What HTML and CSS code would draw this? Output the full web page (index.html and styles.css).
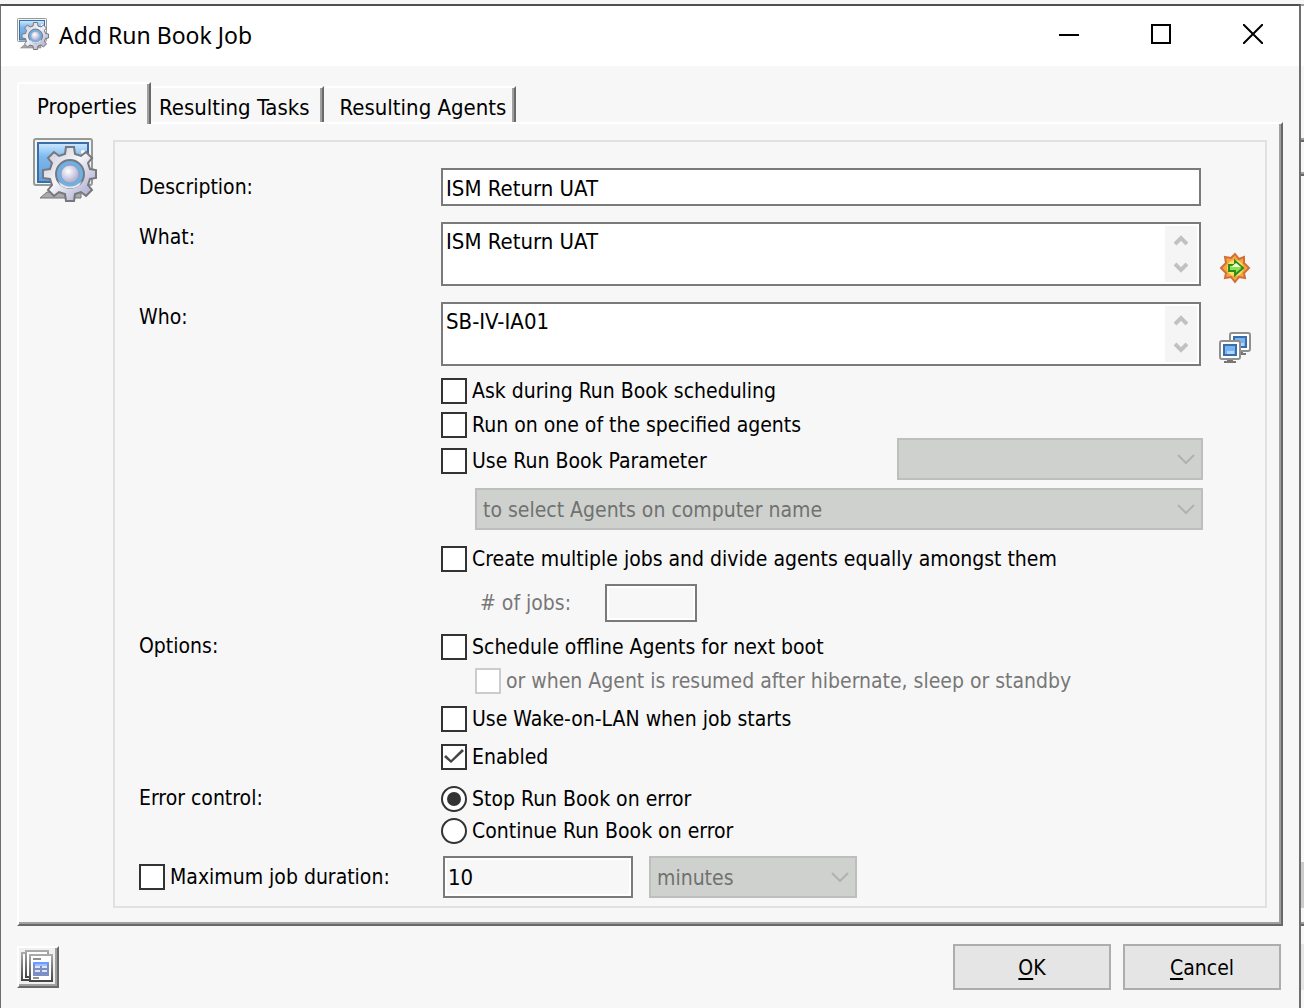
FILE: index.html
```html
<!DOCTYPE html>
<html lang="en">
<head>
<meta charset="utf-8">
<title>Add Run Book Job</title>
<link rel="stylesheet" href="styles.css">
</head>
<body>
<svg class="defs" aria-hidden="true">
  <defs>
    <linearGradient id="screen" x1="0" y1="0" x2="0" y2="1"><stop offset="0" stop-color="#cfe9ff"/><stop offset=".35" stop-color="#7db9ee"/><stop offset="1" stop-color="#5f9fd8"/></linearGradient>
    <linearGradient id="metal" x1="0" y1="0" x2="1" y2="1"><stop offset="0" stop-color="#c4c4d4"/><stop offset=".45" stop-color="#f5f5fa"/><stop offset="1" stop-color="#9a9ac8"/></linearGradient>
    <radialGradient id="hub" cx=".4" cy=".35" r=".7"><stop offset="0" stop-color="#fff"/><stop offset="1" stop-color="#a6a6cc"/></radialGradient>
    <linearGradient id="page" x1="0" y1="0" x2="0" y2="1"><stop offset="0" stop-color="#aaa"/><stop offset="1" stop-color="#444"/></linearGradient>
    <symbol id="job" viewBox="0 0 64 64">
      <path d="M7 60l7-6h34v6z" fill="#aaa" stroke="#777"/>
      <rect x="1" y="1" width="58" height="46" rx="2" fill="#f4f4f4" stroke="#969a96" stroke-width="2"/>
      <rect x="5" y="5" width="50" height="39" fill="url(#screen)" stroke="#3a6ea8" stroke-width="2"/>
      <circle cx="50" cy="14" r="2" fill="#fff"/>
      <path transform="translate(37 36)" fill="url(#metal)" stroke="#77777c" stroke-width="2" d="M-5-20L-4-27H4L5-20L11-18L16-22L22-16L18-11L20-5L26-4V4L20 5L18 11L22 16L16 22L11 18L5 20L4 27H-4L-5 20L-11 18L-16 22L-22 16L-18 11L-20 5L-27 4V-4L-20-5L-18-11L-22-16L-16-22L-11-18Z"/>
      <circle cx="37" cy="36" r="14" fill="#6cb0e4" stroke="#77777c" stroke-width="2"/>
      <path d="M25 43q12 11 24 0l-3 5q-9 5-18 0z" fill="#e8e8ea"/>
      <circle cx="37" cy="36" r="9" fill="url(#hub)" stroke="#9c9cb8" stroke-width="1"/>
    </symbol>
    <symbol id="up" viewBox="0 0 14 12"><path d="M1 10l6-6 6 6" fill="none" stroke="#c0c2c0" stroke-width="4"/></symbol>
    <symbol id="down" viewBox="0 0 14 12"><path d="M1 2l6 6 6-6" fill="none" stroke="#c0c2c0" stroke-width="4"/></symbol>
    <symbol id="chevron" viewBox="0 0 18 12"><path d="M1 2l8 8 8-8" fill="none" stroke="#b0b2b0" stroke-width="2"/></symbol>
    <symbol id="monitor" viewBox="0 0 22 24">
      <path d="M8 18h6v3h3v2H5v-2h3z" fill="#777"/>
      <rect x="1" y="1" width="20" height="18" rx="2" fill="#fff" stroke="#909090" stroke-width="2"/>
      <rect x="5" y="5" width="12" height="10" fill="#78b4f4" stroke="#3a6ea8" stroke-width="2"/>
      <path d="M8 11h7v3H8z" fill="#b0d6ff"/>
    </symbol>
  </defs>
</svg>
<div class="desktop">
  <main class="dialog">
    <header class="titlebar">
      <svg class="app-icon"><use href="#job"/></svg>
      <h1>Add Run Book Job</h1>
      <button class="caption" type="button" aria-label="Minimize"><svg viewBox="0 0 20 20"><path d="M0 11h20" stroke="#000" stroke-width="2"/></svg></button>
      <button class="caption" type="button" aria-label="Maximize"><svg viewBox="0 0 20 20"><path d="M1 1h18v18H1z" fill="none" stroke="#000" stroke-width="2"/></svg></button>
      <button class="caption" type="button" aria-label="Close"><svg viewBox="0 0 20 20"><path d="M0 0l20 20M20 0L0 20" stroke="#000" stroke-width="2"/></svg></button>
    </header>
    <form class="content">
      <div class="tabs" role="tablist">
        <button class="tab active" type="button" role="tab" aria-selected="true">Properties</button>
        <button class="tab" type="button" role="tab">Resulting Tasks</button>
        <button class="tab last" type="button" role="tab">Resulting Agents</button>
      </div>
      <section class="panel">
        <svg class="panel-icon"><use href="#job"/></svg>
        <div class="group">
          <div class="section">
            <label class="field-label" for="description">Description:</label>
            <input class="text" id="description" value="ISM Return UAT">
          </div>
          <div class="section">
            <label class="row-label" for="what">What:</label>
            <div class="memo">
              <textarea id="what">ISM Return UAT</textarea>
              <span class="scroll"><svg><use href="#up"/></svg><svg><use href="#down"/></svg></span>
            </div>
            <button class="pick" type="button" aria-label="Select task">
              <svg viewBox="0 0 32 32">
                <path d="M16 2l4 5 5-2v6l5 5-5 5 1 5-6-1-4 5-4-5-6 1 1-5-5-5 5-5-1-6 6 1z" fill="#f7a83c" stroke="#d07038" stroke-width="2"/>
                <circle cx="16" cy="16" r="8" fill="#fde06a"/>
                <path d="M10 13h6V9l8 7-8 7v-4h-6z" fill="#8fe04a" stroke="#2e8b1e" stroke-width="2"/>
                <path d="M17 11l5 4H12z" fill="#e8ffd0"/>
              </svg>
            </button>
          </div>
          <div class="section">
            <label class="row-label" for="who">Who:</label>
            <div class="memo">
              <textarea id="who">SB-IV-IA01</textarea>
              <span class="scroll"><svg><use href="#up"/></svg><svg><use href="#down"/></svg></span>
            </div>
            <button class="pick" type="button" aria-label="Select agents">
              <svg viewBox="0 0 32 32">
                <use href="#monitor" x="10" y="0" width="22" height="24"/>
                <use href="#monitor" x="0" y="8" width="22" height="24"/>
              </svg>
            </button>
          </div>
          <div class="section agents">
            <div class="stack">
              <label class="check"><input type="checkbox">Ask during Run Book scheduling</label>
              <label class="check gap-s"><input type="checkbox">Run on one of the specified agents</label>
              <div class="parameter">
                <label class="check"><input type="checkbox">Use Run Book Parameter</label>
                <span class="drop"><select disabled aria-label="Run Book Parameter"><option></option></select><svg><use href="#chevron"/></svg></span>
              </div>
              <span class="drop indent gap-s"><select disabled aria-label="Select agents by"><option>to select Agents on computer name</option></select><svg><use href="#chevron"/></svg></span>
              <label class="check gap-l"><input type="checkbox">Create multiple jobs and divide agents equally amongst them</label>
              <div class="jobs gap-m">
                <label for="jobs"># of jobs:</label>
                <input class="text" id="jobs" disabled>
              </div>
            </div>
          </div>
          <div class="section options">
            <span class="field-label">Options:</span>
            <div class="stack">
              <label class="check"><input type="checkbox">Schedule offline Agents for next boot</label>
              <label class="check indent gap-s"><input type="checkbox" disabled>or when Agent is resumed after hibernate, sleep or standby</label>
              <label class="check gap-m"><input type="checkbox">Use Wake-on-LAN when job starts</label>
              <label class="check gap-m"><input type="checkbox" checked>Enabled</label>
            </div>
          </div>
          <div class="section errors">
            <span class="field-label">Error control:</span>
            <div class="stack">
              <label class="check"><input type="radio" name="error" checked>Stop Run Book on error</label>
              <label class="check gap-xs"><input type="radio" name="error">Continue Run Book on error</label>
            </div>
          </div>
          <div class="section duration">
            <label class="check"><input type="checkbox">Maximum job duration:</label>
            <div class="duration-fields">
              <input class="text" value="10" disabled aria-label="Duration">
              <span class="drop"><select disabled aria-label="Duration unit"><option>minutes</option></select><svg><use href="#chevron"/></svg></span>
            </div>
          </div>
        </div>
      </section>
      <footer class="actions">
        <button class="tool" type="button" aria-label="Templates">
          <svg viewBox="0 0 34 34">
            <rect x="1" y="3" width="22" height="27" fill="#fff" stroke="url(#page)" stroke-width="2"/>
            <rect x="5" y="1" width="22" height="26" fill="#fff" stroke="url(#page)" stroke-width="2"/>
            <rect x="9" y="5" width="22" height="26" fill="#fff" stroke="url(#page)" stroke-width="2"/>
            <path d="M12 9h8M12 28h6" stroke="#909090" stroke-width="2"/>
            <path d="M12 12h16v14H12z" fill="#7b8fc4"/>
            <path d="M12 12h16v2H12z" fill="#6c9cff"/>
            <path d="M14 14h12v2H14z" fill="#9cc0ff"/>
            <path d="M14 17h5M21 17h5M14 21h5M21 21h5" stroke="#e0e6f4" stroke-width="2"/>
          </svg>
        </button>
        <button class="action" type="submit"><u>O</u>K</button>
        <button class="action" type="button"><u>C</u>ancel</button>
      </footer>
    </form>
  </main>
  <div class="behind"></div>
</div>
</body>
</html>
```
FILE: styles.css
```css
* { box-sizing: border-box; }

body {
  margin: 0;
  background: #f7f7f7;
  color: #000;
  font: 21px/26px "DejaVu Sans Condensed", "Noto Sans", sans-serif;
}

button, input, select, textarea {
  margin: 0;
  border-radius: 0;
  color: inherit;
  font: inherit;
}

svg { display: block; }
.defs { position: absolute; width: 0; height: 0; }

.desktop {
  display: flex;
  min-height: 100vh;
  padding-top: 4px;
}

.dialog {
  flex: 1;
  border: solid #6e6e6e;
  border-width: 2px 2px 0 1px;
  border-top-color: #505050;
}

/* Sliver of the parent window that shows beside the dialog */
.behind {
  width: 3px;
  background: linear-gradient(
    #a0a0a0 0 2px, #fff 2px 62px, #f7f7f7 62px 134px, #a0a0a0 134px 136px, #696969 136px 138px,
    #f7f7f7 138px 168px, #a0a0a0 168px 170px, #696969 170px 172px, #f7f7f7 172px 858px,
    #ccc 858px 904px, #f7f7f7 904px 918px, #a0a0a0 918px 920px, #696969 920px 922px,
    #f7f7f7 922px 940px, #e5e5e5 940px 986px, #f7f7f7 986px);
}

.titlebar {
  display: flex;
  align-items: center;
  height: 60px;
  padding: 0 0 4px 16px;
  background: #fff;
}
.app-icon { width: 32px; height: 32px; }
.titlebar h1 {
  flex: 1;
  margin: 2px 0 0 10px;
  font: 23px/28px "Noto Sans", "Open Sans", sans-serif;
}
.caption {
  display: grid;
  place-items: center;
  width: 92px;
  height: 56px;
  padding: 0;
  border: 0;
  background: none;
}
.caption svg { width: 20px; height: 20px; }

.content { padding: 16px 16px 18px; }

.tabs {
  display: flex;
  align-items: flex-end;
  font-size: 22px;
}
.tab {
  height: 36px;
  padding: 6px 12px 0 8px;
  border: solid #fff;
  border-width: 2px 2px 0 0;
  border-right-color: #696969;
  border-top-left-radius: 4px;
  background: #f7f7f7;
  box-shadow: inset -2px 0 #a0a0a0;
  white-space: nowrap;
}
.tab.active {
  z-index: 1;
  height: 42px;
  margin-bottom: -2px;
  padding: 6px 12px 0 18px;
  border-left: 2px solid #fff;
}
.tab.last { padding: 6px 8px 0 16px; }

.panel {
  display: flex;
  align-items: flex-start;
  gap: 16px;
  padding: 14px 14px 16px;
  border: 2px solid #fff;
  border-right-color: #696969;
  border-bottom-color: #696969;
  box-shadow: inset -2px -2px #a0a0a0;
}
.panel-icon { flex: none; width: 64px; height: 64px; }

.group {
  flex: 1;
  min-width: 0;
  margin-top: 2px;
  padding: 26px 14px 8px 24px;
  border: 2px solid #e1e1e1;
}
.section {
  display: grid;
  grid-template-columns: 284px minmax(0, 1fr) 32px;
  column-gap: 18px;
  margin-bottom: 16px;
}
.section > .stack { grid-column: 2; }
.agents { margin-top: -4px; margin-bottom: 12px; }
.errors { margin-bottom: 12px; }
.duration { margin-bottom: 0; }
.field-label { line-height: 24px; }
label.field-label { align-self: center; }
.row-label { line-height: 30px; }

.text {
  width: 100%;
  height: 38px;
  padding: 2px 3px 0;
  border: 2px solid #7a7a7a;
  background: #fff;
  font-size: 22px;
}
.text:disabled {
  background: #f7f7f7;
  box-shadow: inset 0 0 0 2px #fff;
}

.memo {
  display: flex;
  height: 64px;
  padding: 2px;
  border: 2px solid #7a7a7a;
  background: #fff;
  font-size: 22px;
}
.memo textarea {
  flex: 1;
  min-width: 0;
  padding: 3px 1px;
  border: 0;
  background: #fff;
  resize: none;
  overflow: hidden;
}
.scroll {
  display: flex;
  flex-direction: column;
  justify-content: space-between;
  align-items: center;
  width: 32px;
  padding: 8px 0;
  background: #f5f5f5;
}
.scroll svg { width: 14px; height: 12px; }

.pick {
  align-self: end;
  width: 32px;
  height: 32px;
  margin-bottom: 2px;
  padding: 0;
  border: 0;
  background: none;
}
.pick svg { width: 32px; height: 32px; }

.stack { display: flex; flex-direction: column; }
.gap-xs { margin-top: 6px; }
.gap-s { margin-top: 8px; }
.gap-m { margin-top: 12px; }
.gap-l { margin-top: 16px; }
.indent { margin-left: 34px; }

.check {
  display: flex;
  align-items: center;
  gap: 5px;
  line-height: 26px;
  white-space: nowrap;
}
.check input {
  display: grid;
  flex: none;
  place-items: center;
  width: 26px;
  height: 26px;
  border: 2px solid #333;
  background: #fff;
  appearance: none;
}
.check input[type="radio"] { border-radius: 50%; }
.check input[type="radio"]:checked::before {
  width: 14px;
  height: 14px;
  border-radius: 50%;
  background: #333;
  content: "";
}
.check input[type="checkbox"]:checked::before {
  width: 20px;
  height: 16px;
  background: #444;
  clip-path: polygon(0 8px, 2px 6px, 7px 11px, 18px 0, 20px 2px, 7px 14px);
  content: "";
}
.check input:disabled { border-color: #ccc; }
.check:has(input:disabled), .jobs { color: #777; }

.parameter {
  display: flex;
  align-items: center;
  justify-content: space-between;
  margin-right: -2px;
}
.parameter .check { padding-top: 4px; }
.parameter .drop { width: 306px; }

.drop { display: grid; align-items: center; }
.drop > * { grid-area: 1 / 1; }
.drop.indent { margin-right: -2px; }
.drop select {
  width: 100%;
  height: 42px;
  padding: 2px 6px 0;
  border: 2px solid #bdbfbd;
  background: #cfd1ce;
  color: #707270;
  opacity: 1;
  appearance: none;
}
.drop svg {
  justify-self: end;
  width: 18px;
  height: 12px;
  margin-right: 8px;
}

.jobs {
  display: flex;
  align-items: center;
  padding-left: 39px;
}
.jobs label { width: 125px; }
.jobs .text { width: 92px; }

.duration-fields {
  display: flex;
  gap: 16px;
  padding-left: 2px;
}
.duration-fields .text { width: 190px; height: 42px; padding-top: 0; }
.duration-fields .drop { width: 208px; }

.actions {
  display: flex;
  align-items: center;
  gap: 12px;
  padding: 18px 2px 0 0;
}
.tool {
  width: 42px;
  height: 42px;
  margin-right: auto;
  padding: 2px;
  border: 2px solid #fff;
  border-right-color: #696969;
  border-bottom-color: #696969;
  background: #f0f0f0;
  box-shadow: inset -2px -2px #a0a0a0;
}
.tool svg { width: 34px; height: 34px; }
.action {
  width: 158px;
  height: 46px;
  padding: 2px 0 0;
  border: 2px solid #adadad;
  background: #e5e5e5;
}
.action u { text-underline-offset: 3px; text-decoration-thickness: 2px; }
```
